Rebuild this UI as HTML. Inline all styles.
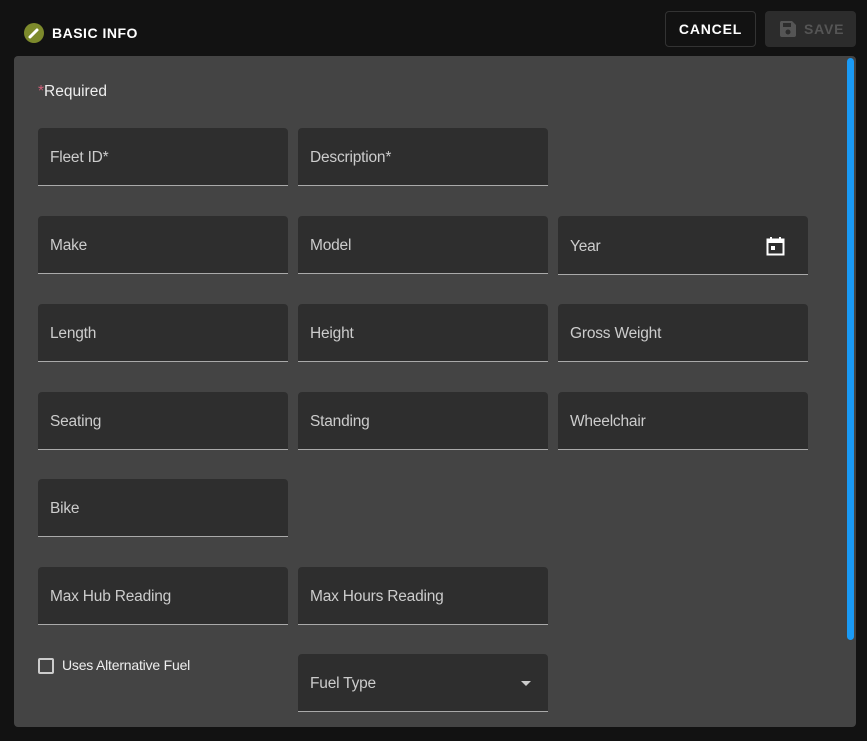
<!DOCTYPE html>
<html><head><style>
body{margin:0;width:867px;height:741px;background:#121212;font-family:"Liberation Sans",sans-serif;position:relative;overflow:hidden}
.abs{position:absolute}
.panel{left:14px;top:56px;width:842px;height:671px;background:#444;border-radius:4px}
.f{position:absolute;width:250px;height:57px;background:#2e2e2e;border-radius:4px 4px 0 0;border-bottom:1px solid #aaa;box-sizing:content-box}
.f span{position:absolute;left:12px;top:21px;font-size:15.5px;color:#ccc;letter-spacing:-0.2px}
</style></head><body>
<div class="abs" style="left:24px;top:23px;width:20px;height:20px;border-radius:50%;background:#7d8a2c"></div>
<svg class="abs" style="left:24px;top:23px" width="20" height="20" viewBox="0 0 20 20"><path d="M6 14 L13 7" stroke="#fff" stroke-width="3" stroke-linecap="round"/></svg>
<div class="abs" style="left:52px;top:25px;color:#fff;font-weight:bold;font-size:14px;letter-spacing:0.5px">BASIC INFO</div>
<div class="abs" style="left:665px;top:11px;width:89px;height:34px;border:1px solid #333;border-radius:4px;color:#fff;font-size:14px;font-weight:bold;letter-spacing:0.8px;text-align:center;line-height:34px">CANCEL</div>
<div class="abs" style="left:765px;top:11px;width:91px;height:36px;background:#2c2c2c;border-radius:4px;color:#555;font-size:14px;font-weight:bold;letter-spacing:0.8px;line-height:36px">
<svg style="position:absolute;left:14px;top:9px" width="18" height="18" viewBox="0 0 18 18"><path d="M2 1h11l4 4v10a2 2 0 0 1-2 2H3a2 2 0 0 1-2-2V3a2 2 0 0 1 1-2z" fill="#555"/><rect x="4" y="3" width="8" height="4" fill="#2c2c2c"/><circle cx="9" cy="12" r="2.5" fill="#2c2c2c"/></svg>
<span style="position:absolute;left:39px">SAVE</span></div>
<div class="abs panel"></div>
<div class="abs" style="left:847px;top:58px;width:7px;height:582px;background:#1a9af5;border-radius:4px"></div>
<div class="abs" style="left:38px;top:83px;font-size:15.5px;color:#eee"><span style="color:#d0607a">*</span>Required</div>
<div class="f" style="left:38px;top:128px"><span>Fleet ID*</span></div>
<div class="f" style="left:298px;top:128px"><span>Description*</span></div>
<div class="f" style="left:38px;top:216px"><span>Make</span></div>
<div class="f" style="left:298px;top:216px"><span>Model</span></div>
<div class="f" style="left:558px;top:216px;height:58px"><span style="top:22px">Year</span>
<svg style="position:absolute;left:208px;top:20px" width="20" height="20" viewBox="0 0 20 20"><rect x="1.5" y="3.5" width="16" height="15" fill="none" stroke="#fff" stroke-width="2"/><rect x="1" y="3" width="17" height="4" fill="#fff"/><rect x="4" y="1" width="2" height="3" fill="#fff"/><rect x="13" y="1" width="2" height="3" fill="#fff"/><rect x="5" y="10" width="4" height="4" fill="#fff"/></svg></div>
<div class="f" style="left:38px;top:304px"><span>Length</span></div>
<div class="f" style="left:298px;top:304px"><span>Height</span></div>
<div class="f" style="left:558px;top:304px"><span>Gross Weight</span></div>
<div class="f" style="left:38px;top:392px"><span>Seating</span></div>
<div class="f" style="left:298px;top:392px"><span>Standing</span></div>
<div class="f" style="left:558px;top:392px"><span>Wheelchair</span></div>
<div class="f" style="left:38px;top:479px"><span>Bike</span></div>
<div class="f" style="left:38px;top:567px"><span>Max Hub Reading</span></div>
<div class="f" style="left:298px;top:567px"><span>Max Hours Reading</span></div>
<div class="abs" style="left:38px;top:658px;width:12px;height:12px;border:2px solid #ccc;border-radius:2px"></div>
<div class="abs" style="left:62px;top:657px;font-size:14px;color:#eee;letter-spacing:-0.2px">Uses Alternative Fuel</div>
<div class="f" style="left:298px;top:654px"><span>Fuel Type</span>
<div style="position:absolute;left:223px;top:27px;width:0;height:0;border-left:5px solid transparent;border-right:5px solid transparent;border-top:5px solid #ccc"></div></div>
</body></html>
